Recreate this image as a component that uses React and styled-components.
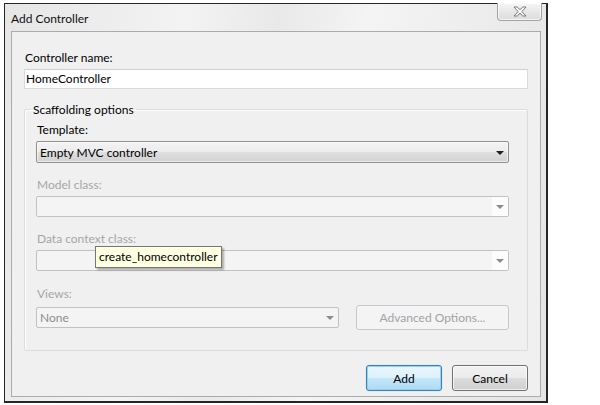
import React from "react";
import styled, { createGlobalStyle } from "styled-components";

const GlobalStyle = createGlobalStyle`
  html, body {
    margin: 0;
    background: #fff;
  }

  body {
    font-family: Lato, "Open Sans", sans-serif;
    font-size: 12px;
    color: #000;
  }
`;

const Page = styled.div`
  box-sizing: border-box;
  width: 600px;
  height: 405px;
  padding: 3px 0 0 4px;
  overflow: hidden;
`;

const Window = styled.div`
  box-sizing: border-box;
  display: flex;
  flex-direction: column;

  width: 544px;
  height: 400px;

  border: 1px solid #262626;
  border-right-width: 2px;
  border-bottom-width: 2px;
  background: linear-gradient(100deg, #e6e6e6 0%, #f3f3f3 30%, #e9e9e9 45%, #f4f4f4 60%, #e4e4e4 100%);
`;

const TitleBar = styled.div`
  display: flex;
  align-items: flex-start;
  height: 27px;
  flex-shrink: 0;
`;

const Title = styled.span`
  padding: 7px 0 0 6px;
  line-height: 15px;
  color: #111;
`;

const CloseButton = styled.div`
  box-sizing: border-box;
  display: flex;
  align-items: center;
  justify-content: center;

  width: 45px;
  height: 18px;
  margin: -1px 4px 0 auto;

  border: 1px solid #a3a3a3;
  border-top: none;
  border-radius: 0 0 4px 4px;
  background: linear-gradient(#f7f7f7, #e6e6e6 55%, #dcdcdc);
  box-shadow: inset 0 0 0 1px rgba(255, 255, 255, 0.7);
`;

const Client = styled.div`
  box-sizing: border-box;
  flex: 1;
  margin: 0 5px 4px 6px;
  padding: 18px 12px 0 12px;

  border: 1px solid #ababab;
  background: #f0f0f0;
`;

const Label = styled.div`
  line-height: 15px;
  margin: ${(p) => p.$top || 0}px 0 4px 1px;
  color: ${(p) => (p.$disabled ? "#a6a6a6" : "#000")};
`;

const TextBox = styled.div`
  box-sizing: border-box;
  height: 20px;
  padding-left: 1px;
  line-height: 18px;

  border: 1px solid #dadada;
  border-top-color: #cfcfcf;
  background: #fff;
`;

const GroupBox = styled.fieldset`
  min-width: 0;
  margin: 13px 0 0 0;
  padding: 5px 18px 20px 11px;
  border: 1px solid #d9dde0;
  border-radius: 2px;
  box-shadow: inset 1px 1px 0 #fff;
`;

const Legend = styled.legend`
  margin-left: -5px;
  padding: 0 2px;
  line-height: 15px;
`;

const Combo = styled.div`
  position: relative;
  box-sizing: border-box;
  display: flex;
  align-items: center;

  width: ${(p) => (p.$width ? `${p.$width}px` : "auto")};
  height: ${(p) => p.$height || 21}px;
  padding-left: 3px;

  border: 1px solid ${(p) => (p.$disabled ? "#c2c2c2" : "#8e8f8f")};
  border-radius: 2px;
  background: ${(p) =>
    p.$disabled
      ? "#f4f4f4"
      : "linear-gradient(#f3f3f3 0%, #ececec 50%, #dfdfdf 50%, #d2d2d2 100%)"};
  box-shadow: ${(p) => (p.$disabled ? "none" : "inset 0 0 0 1px rgba(255,255,255,0.6)")};
  color: ${(p) => (p.$disabled ? "#8d8d8d" : "#000")};
`;

const ComboText = styled.span`
  flex: 1;
  white-space: nowrap;
`;

const ArrowCell = styled.div`
  display: flex;
  align-items: center;
  justify-content: center;
  align-self: stretch;
  width: 16px;
  background: ${(p) => (p.$light ? "#fcfcfc" : "transparent")};
`;

const Arrow = styled.div`
  width: 0;
  height: 0;
  border-left: 4px solid transparent;
  border-right: 4px solid transparent;
  border-top: 4px solid ${(p) => (p.$disabled ? "#8c8c8c" : "#1e1e1e")};
  margin-top: 1px;
`;

const Tooltip = styled.div`
  position: absolute;
  left: 58px;
  top: -5px;
  z-index: 2;

  padding: 0 3px;
  line-height: 20px;
  white-space: nowrap;

  border: 1px solid #767676;
  background: #ffffe1;
  color: #000;
  box-shadow: 2px 2px 2px rgba(0, 0, 0, 0.3);
`;

const ViewsRow = styled.div`
  display: flex;
  align-items: center;
  gap: 17px;
`;

const Button = styled.div`
  box-sizing: border-box;
  display: flex;
  align-items: center;
  justify-content: center;

  width: ${(p) => p.$width || 76}px;
  height: ${(p) => p.$height || 26}px;

  border: 1px solid ${(p) => (p.$primary ? "#3c7fb1" : p.$disabled ? "#c6c9cb" : "#707070")};
  border-radius: 3px;
  background: ${(p) =>
    p.$primary
      ? "linear-gradient(#ebf6fd 0%, #dcf1fc 50%, #c5e7f9 50%, #aedaf2 100%)"
      : p.$disabled
      ? "#f4f4f4"
      : "linear-gradient(#f2f2f2 0%, #ebebeb 50%, #dddddd 50%, #cfcfcf 100%)"};
  box-shadow: ${(p) =>
    p.$primary
      ? "inset 0 0 0 1px #94d3f3, 0 0 1px #6cc0ea"
      : p.$disabled
      ? "none"
      : "inset 0 0 0 1px rgba(255,255,255,0.7)"};
  color: ${(p) => (p.$disabled ? "#a2a2a2" : "#000")};
`;

const Footer = styled.div`
  display: flex;
  justify-content: flex-end;
  gap: 10px;
  margin-top: 14px;
`;

const CloseGlyph = () => (
  <svg width="14" height="11" viewBox="0 0 14 11">
    <polygon
      points="1,1 4.2,1 7,3.7 9.8,1 13,1 8.9,5.5 13,10 9.8,10 7,7.3 4.2,10 1,10 5.1,5.5"
      fill="#fafafa"
      stroke="#7a7a7a"
      strokeWidth="1"
      strokeLinejoin="round"
    />
  </svg>
);

const DropDown = ({ value, disabled, height, width, lightArrow, children }) => (
  <Combo $disabled={disabled} $height={height} $width={width}>
    <ComboText>{value}</ComboText>
    <ArrowCell $light={lightArrow}>
      <Arrow $disabled={disabled} />
    </ArrowCell>
    {children}
  </Combo>
);

export default function App() {
  return (
    <Page>
      <GlobalStyle />
      <Window>
        <TitleBar>
          <Title>Add Controller</Title>
          <CloseButton>
            <CloseGlyph />
          </CloseButton>
        </TitleBar>
        <Client>
          <Label>Controller name:</Label>
          <TextBox>HomeController</TextBox>

          <GroupBox>
            <Legend>Scaffolding options</Legend>

            <Label>Template:</Label>
            <DropDown value="Empty MVC controller" height={22} />

            <Label $top={14} $disabled>
              Model class:
            </Label>
            <DropDown disabled lightArrow />

            <Label $top={14} $disabled>
              Data context class:
            </Label>
            <DropDown disabled lightArrow>
              <Tooltip>create_homecontroller</Tooltip>
            </DropDown>

            <Label $top={15} $disabled>
              Views:
            </Label>
            <ViewsRow>
              <DropDown value="None" disabled width={303} />
              <Button $disabled $width={153} $height={25}>
                Advanced Options...
              </Button>
            </ViewsRow>
          </GroupBox>

          <Footer>
            <Button $primary>Add</Button>
            <Button>Cancel</Button>
          </Footer>
        </Client>
      </Window>
    </Page>
  );
}
